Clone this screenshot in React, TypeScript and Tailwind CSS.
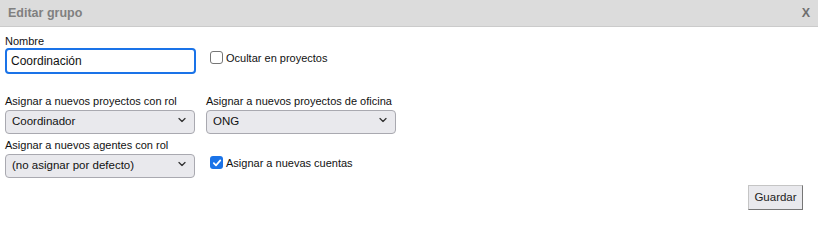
import React from 'react';

const Chevron = () => (
  <svg className="pointer-events-none absolute right-[9px] top-1/2 -translate-y-1/2" width="8" height="5" viewBox="0 0 8 5" fill="none">
    <path d="M1 1l3 3 3-3" stroke="#333" strokeWidth="1.3" strokeLinecap="round" strokeLinejoin="round" />
  </svg>
);

const Select = ({ value, className = '' }: { value: string; className?: string }) => (
  <div className={`relative h-[24px] ${className}`}>
    <select
      defaultValue={value}
      className="h-full w-full appearance-none rounded-[4px] border border-[#a9a9b0] bg-[#e9e9ed] pl-[6px] pr-6 text-[11.5px] text-[#111] outline-none"
    >
      <option>{value}</option>
    </select>
    <Chevron />
  </div>
);

export default function App() {
  return (
    <div className="w-[818px] h-[225px] bg-white font-['Liberation_Sans',Arial,sans-serif] text-[#111]">
      <div className="flex h-[27px] items-center justify-between border-b border-[#cbcbcb] bg-[#dcdcdc] pl-[8px] pr-[8px]">
        <span className="text-[12.5px] font-bold text-[#808080]">Editar grupo</span>
        <span className="text-[12.5px] font-bold text-[#707070]">X</span>
      </div>

      <div className="px-[5px] pt-[7px]">
        <div className="flex items-end">
          <div className="flex w-[191px] flex-col">
            <label className="h-[14px] text-[11px] leading-[14px]">Nombre</label>
            <input
              defaultValue="Coordinación"
              className="h-[26px] w-[191px] rounded-[4px] border-2 border-[#1a73e8] px-[3px] pl-[4px] text-[12px] outline-none"
            />
          </div>
          <label className="mb-[8px] ml-[14px] flex items-center text-[11px]">
            <span className="mr-[3px] h-[13px] w-[13px] rounded-[3px] border border-[#767676] bg-white" />
            Ocultar en proyectos
          </label>
        </div>

        <div className="mt-[20px] flex gap-[10px]">
          <div className="flex w-[191px] flex-col">
            <label className="h-[14px] text-[11px] leading-[14px]">Asignar a nuevos proyectos con rol</label>
            <Select value="Coordinador" className="w-[190px]" />
          </div>
          <div className="flex w-[191px] flex-col">
            <label className="h-[14px] text-[11px] leading-[14px]">Asignar a nuevos proyectos de oficina</label>
            <Select value="ONG" className="w-[190px]" />
          </div>
        </div>

        <div className="mt-[6px] flex items-end">
          <div className="flex w-[191px] flex-col">
            <label className="h-[14px] text-[11px] leading-[14px]">Asignar a nuevos agentes con rol</label>
            <Select value="(no asignar por defecto)" className="w-[190px]" />
          </div>
          <label className="mb-[5px] ml-[14px] flex items-center text-[11px]">
            <span className="mr-[3px] flex h-[13px] w-[13px] items-center justify-center rounded-[3px] bg-[#1a73e8]">
              <svg width="10" height="10" viewBox="0 0 10 10" fill="none">
                <path d="M1.8 5.2l2.2 2.2 4.3-5" stroke="white" strokeWidth="1.7" strokeLinecap="round" strokeLinejoin="round" />
              </svg>
            </span>
            Asignar a nuevas cuentas
          </label>
        </div>

        <div className="mt-[9px] flex justify-end pr-[10px]">
          <button className="h-[25px] w-[55px] border border-[#767676] border-l-[#c5c5c5] border-t-[#c5c5c5] bg-[#e9e9ed] text-[11.5px] text-[#222]">
            Guardar
          </button>
        </div>
      </div>
    </div>
  );
}
